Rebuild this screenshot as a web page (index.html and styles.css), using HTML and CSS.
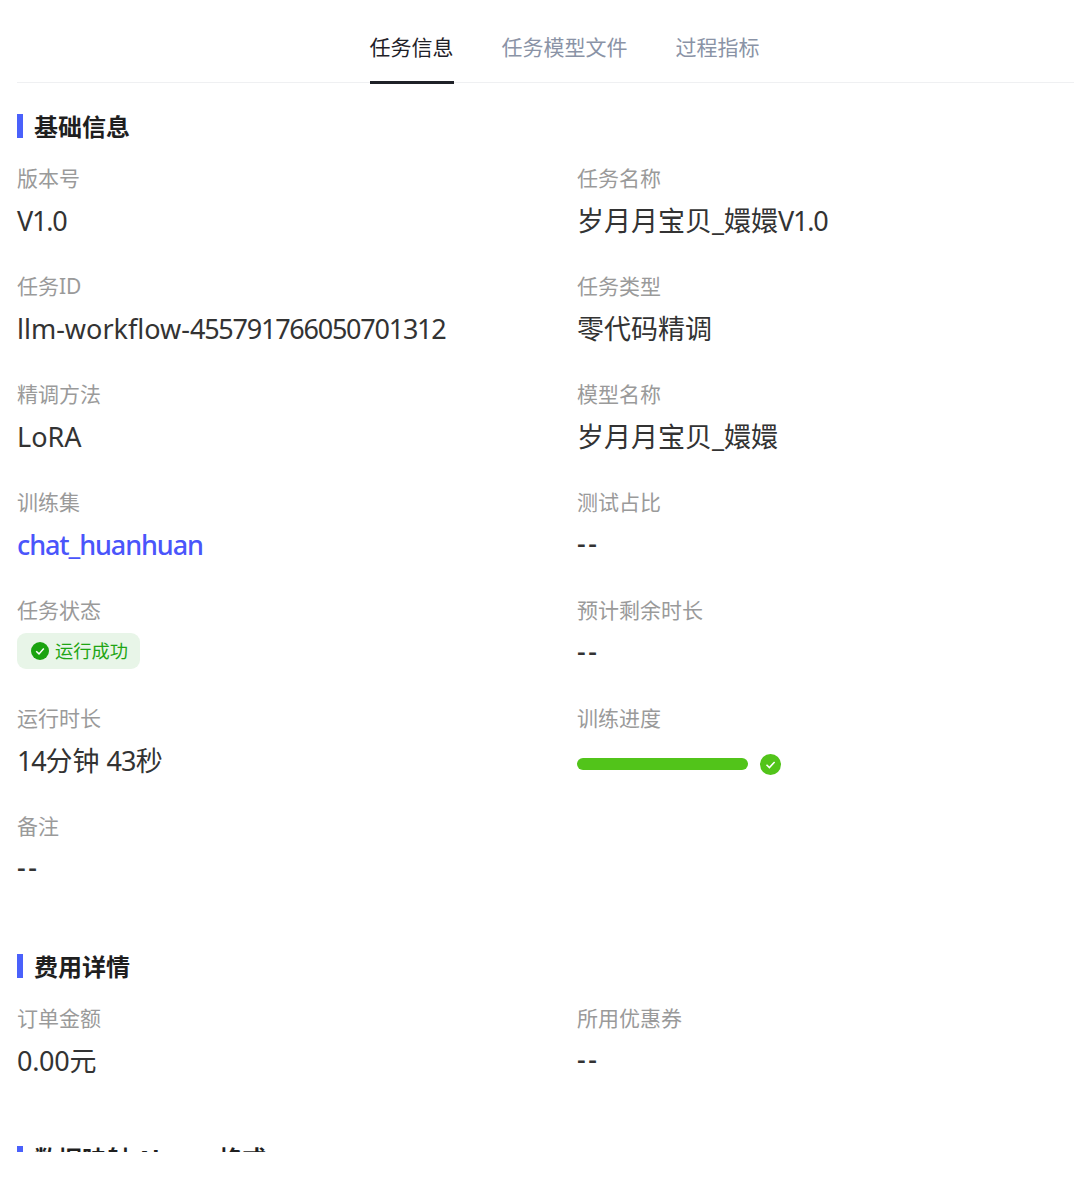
FILE: index.html
```html
<!DOCTYPE html>
<html lang="zh-CN">
<head>
<meta charset="utf-8">
<title>任务详情</title>
<link rel="stylesheet" href="styles.css">
</head>
<body>
<main class="page">
  <nav class="tabs">
    <a class="tab active">任务信息</a>
    <a class="tab">任务模型文件</a>
    <a class="tab">过程指标</a>
  </nav>
  <section class="section first">
    <h2 class="heading">基础信息</h2>
    <div class="grid">
      <div class="item"><div class="label">版本号</div><div class="value"><span class="num">V1.0</span></div></div>
      <div class="item"><div class="label">任务名称</div><div class="value">岁月月宝贝_嬛嬛<span class="num">V1.0</span></div></div>
      <div class="item"><div class="label">任务ID</div><div class="value">llm-workflow-<span class="num">455791766050701312</span></div></div>
      <div class="item"><div class="label">任务类型</div><div class="value">零代码精调</div></div>
      <div class="item"><div class="label">精调方法</div><div class="value">LoRA</div></div>
      <div class="item"><div class="label">模型名称</div><div class="value">岁月月宝贝_嬛嬛</div></div>
      <div class="item"><div class="label">训练集</div><div class="value link">chat_huanhuan</div></div>
      <div class="item"><div class="label">测试占比</div><div class="value dash">--</div></div>
      <div class="item"><div class="label">任务状态</div>
        <div class="value status-row"><span class="status">
          <svg class="status-icon" viewBox="0 0 18 18"><circle cx="9" cy="9" r="9" fill="#1aa30f"/><path d="M5.2 9.2 8 11.9 12.8 6.6" fill="none" stroke="#fff" stroke-width="1.5"/></svg>
          运行成功</span></div></div>
      <div class="item"><div class="label">预计剩余时长</div><div class="value dash">--</div></div>
      <div class="item"><div class="label">运行时长</div><div class="value"><span class="num">14</span>分钟 <span class="num-wide">43</span>秒</div></div>
      <div class="item"><div class="label">训练进度</div>
        <div class="value progress"><span class="bar"></span>
          <svg class="done-icon" viewBox="0 0 21 21"><circle cx="10.5" cy="10.5" r="10.5" fill="#52c41a"/><path d="M6.5 10.7 9.4 13.6 14.6 7.9" fill="none" stroke="#fff" stroke-width="1.5"/></svg>
        </div></div>
      <div class="item"><div class="label">备注</div><div class="value dash">--</div></div>
    </div>
  </section>
  <section class="section">
    <h2 class="heading">费用详情</h2>
    <div class="grid">
      <div class="item"><div class="label">订单金额</div><div class="value"><span class="num-tight">0.00</span>元</div></div>
      <div class="item"><div class="label">所用优惠券</div><div class="value dash">--</div></div>
    </div>
  </section>
  <section class="section">
    <h2 class="heading">数据映射 <span class="heading-latin">Alpaca</span> 格式</h2>
  </section>
</main>
</body>
</html>
```
FILE: styles.css
```css
* { box-sizing: border-box; }
html, body { margin: 0; background: #fff; }
body { font-family: "Noto Sans", "Noto Sans CJK SC", sans-serif; color: #262626; }
.page { height: 1152px; overflow: hidden; padding-left: 17px; }
.tabs { display: flex; justify-content: center; gap: 48px; height: 83px; border-bottom: 1px solid #eff0f2; padding-left: 38px; }
.tab { height: 84px; padding-top: 29px; font-size: 21px; line-height: 36px; color: #8a93a6; }
.tab.active { color: #1f2128; border-bottom: 3px solid #1f2128; }
.section { margin-top: 38px; }
.section.first { margin-top: 31px; }
.heading { margin: 0; height: 24px; border-left: 6px solid #4a61fb; padding-left: 11px; font-size: 24px; line-height: 26px; font-weight: 700; color: #1f1f1f; white-space: nowrap; }
.heading-latin { letter-spacing: -0.7px; }
.grid { display: grid; grid-template-columns: 560px 1fr; grid-auto-rows: 108px; margin-top: 22px; }
.label { font-size: 21px; line-height: 36px; height: 36px; color: #9a9a9a; }
.value { font-size: 27px; line-height: 36px; margin-top: 7px; color: #333; }
.num { letter-spacing: -1.25px; }
.num-wide { letter-spacing: -0.75px; }
.num-tight { letter-spacing: -0.3px; }
.link { color: #4a55fb; letter-spacing: -1.1px; font-weight: 500; }
.dash { margin-top: 5px; letter-spacing: 2.5px; font-weight: 500; }
.status-row { margin-top: 4px; }
.status { display: inline-flex; align-items: center; height: 36px; padding: 0 12px 0 14px; border-radius: 9px; background: #e8f5e8; color: #1fa514; font-size: 18.25px; gap: 6px; }
.status-icon { width: 18px; height: 18px; }
.progress { display: flex; align-items: center; height: 36px; margin-top: 10px; }
.bar { width: 171px; height: 12px; border-radius: 6px; background: #52c41a; }
.done-icon { width: 21px; height: 21px; margin-left: 12px; }
```
